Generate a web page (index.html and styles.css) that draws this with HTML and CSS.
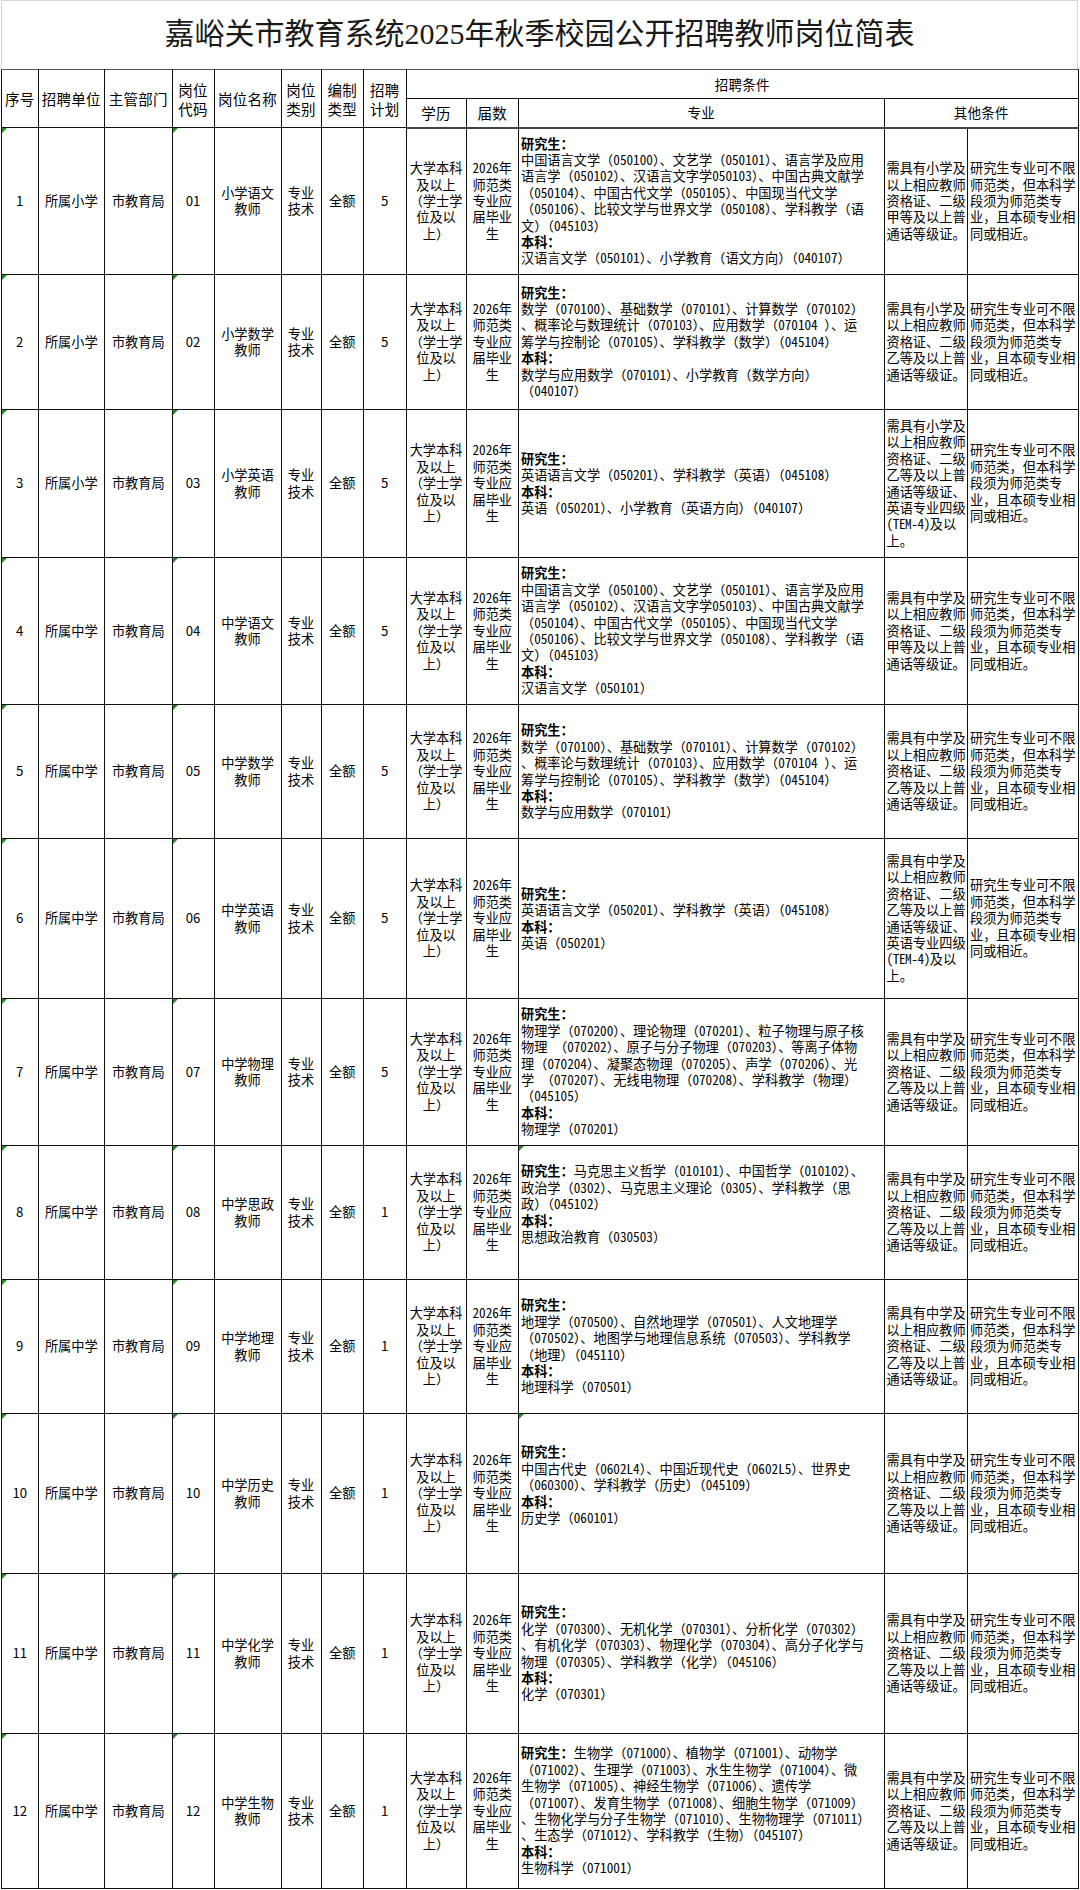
FILE: index.html
```html
<!DOCTYPE html>
<html lang="zh-CN">
<head>
<meta charset="utf-8">
<title>嘉峪关市教育系统2025年秋季校园公开招聘教师岗位简表</title>
<link rel="stylesheet" href="styles.css">
</head>
<body>
<div class="sheet">
  <div class="title">嘉峪关市教育系统2025年秋季校园公开招聘教师岗位简表</div>
  <table class="grid">
    <colgroup>
      <col class="c1"><col class="c2"><col class="c3"><col class="c4"><col class="c5"><col class="c6"><col class="c7"><col class="c8"><col class="c9"><col class="c10"><col class="c11"><col class="c12"><col class="c13">
    </colgroup>
    <thead>
      <tr class="hr">
        <th rowspan="2">序号</th>
        <th rowspan="2">招聘单位</th>
        <th rowspan="2">主管部门</th>
        <th rowspan="2">岗位<br>代码</th>
        <th rowspan="2">岗位名称</th>
        <th rowspan="2">岗位<br>类别</th>
        <th rowspan="2">编制<br>类型</th>
        <th rowspan="2">招聘<br>计划</th>
        <th colspan="5" class="small">招聘条件</th>
      </tr>
      <tr class="hr">
        <th>学历</th>
        <th>届数</th>
        <th class="small">专业</th>
        <th colspan="2" class="small">其他条件</th>
      </tr>
    </thead>
    <tbody>
      <tr class="h147">
        <td class="tri">1</td><td>所属小学</td><td>市教育局</td><td class="tri">01</td><td>小学语文<br>教师</td><td>专业<br>技术</td><td>全额</td><td>5</td>
        <td>大学本科<br>及以上<br>（学士学<br>位及以<br>上）</td>
        <td><span class="n">2026</span>年<br>师范类<br>专业应<br>届毕业<br>生</td>
        <td class="spec"><b>研究生：</b><br>中国语言文学（<span class="n">050100</span>）、文艺学（<span class="n">050101</span>）、语言学及应用<br>语言学（<span class="n">050102</span>）、汉语言文字学<span class="n">050103</span>）、中国古典文献学<br>（<span class="n">050104</span>）、中国古代文学（<span class="n">050105</span>）、中国现当代文学<br>（<span class="n">050106</span>）、比较文学与世界文学（<span class="n">050108</span>）、学科教学（语<br>文）（<span class="n">045103</span>）<br><b>本科：</b><br>汉语言文学（<span class="n">050101</span>）、小学教育（语文方向）（<span class="n">040107</span>）</td>
        <td class="oth">需具有小学及<br>以上相应教师<br>资格证、二级<br>甲等及以上普<br>通话等级证。</td>
        <td class="oth">研究生专业可不限<br>师范类，但本科学<br>段须为师范类专<br>业，且本硕专业相<br>同或相近。</td>
      </tr>
      <tr class="h135">
        <td class="tri">2</td><td>所属小学</td><td>市教育局</td><td class="tri">02</td><td>小学数学<br>教师</td><td>专业<br>技术</td><td>全额</td><td>5</td>
        <td>大学本科<br>及以上<br>（学士学<br>位及以<br>上）</td>
        <td><span class="n">2026</span>年<br>师范类<br>专业应<br>届毕业<br>生</td>
        <td class="spec"><b>研究生：</b><br>数学（<span class="n">070100</span>）、基础数学（<span class="n">070101</span>）、计算数学（<span class="n">070102</span>）<br>、概率论与数理统计（<span class="n">070103</span>）、应用数学（<span class="n">070104 </span>）、运<br>筹学与控制论（<span class="n">070105</span>）、学科教学（数学）（<span class="n">045104</span>）<br><b>本科：</b><br>数学与应用数学（<span class="n">070101</span>）、小学教育（数学方向）<br>（<span class="n">040107</span>）</td>
        <td class="oth">需具有小学及<br>以上相应教师<br>资格证、二级<br>乙等及以上普<br>通话等级证。</td>
        <td class="oth">研究生专业可不限<br>师范类，但本科学<br>段须为师范类专<br>业，且本硕专业相<br>同或相近。</td>
      </tr>
      <tr class="h148">
        <td class="tri">3</td><td>所属小学</td><td>市教育局</td><td class="tri">03</td><td>小学英语<br>教师</td><td>专业<br>技术</td><td>全额</td><td>5</td>
        <td>大学本科<br>及以上<br>（学士学<br>位及以<br>上）</td>
        <td><span class="n">2026</span>年<br>师范类<br>专业应<br>届毕业<br>生</td>
        <td class="spec"><b>研究生：</b><br>英语语言文学（<span class="n">050201</span>）、学科教学（英语）（<span class="n">045108</span>）<br><b>本科：</b><br>英语（<span class="n">050201</span>）、小学教育（英语方向）（<span class="n">040107</span>）</td>
        <td class="oth">需具有小学及<br>以上相应教师<br>资格证、二级<br>乙等及以上普<br>通话等级证、<br>英语专业四级<br><span class="n tem">(TEM-4)</span>及以<br>上。</td>
        <td class="oth">研究生专业可不限<br>师范类，但本科学<br>段须为师范类专<br>业，且本硕专业相<br>同或相近。</td>
      </tr>
      <tr class="h147">
        <td class="tri">4</td><td>所属中学</td><td>市教育局</td><td class="tri">04</td><td>中学语文<br>教师</td><td>专业<br>技术</td><td>全额</td><td>5</td>
        <td>大学本科<br>及以上<br>（学士学<br>位及以<br>上）</td>
        <td><span class="n">2026</span>年<br>师范类<br>专业应<br>届毕业<br>生</td>
        <td class="spec"><b>研究生：</b><br>中国语言文学（<span class="n">050100</span>）、文艺学（<span class="n">050101</span>）、语言学及应用<br>语言学（<span class="n">050102</span>）、汉语言文字学<span class="n">050103</span>）、中国古典文献学<br>（<span class="n">050104</span>）、中国古代文学（<span class="n">050105</span>）、中国现当代文学<br>（<span class="n">050106</span>）、比较文学与世界文学（<span class="n">050108</span>）、学科教学（语<br>文）（<span class="n">045103</span>）<br><b>本科：</b><br>汉语言文学（<span class="n">050101</span>）</td>
        <td class="oth">需具有中学及<br>以上相应教师<br>资格证、二级<br>甲等及以上普<br>通话等级证。</td>
        <td class="oth">研究生专业可不限<br>师范类，但本科学<br>段须为师范类专<br>业，且本硕专业相<br>同或相近。</td>
      </tr>
      <tr class="h134">
        <td class="tri">5</td><td>所属中学</td><td>市教育局</td><td class="tri">05</td><td>中学数学<br>教师</td><td>专业<br>技术</td><td>全额</td><td>5</td>
        <td>大学本科<br>及以上<br>（学士学<br>位及以<br>上）</td>
        <td><span class="n">2026</span>年<br>师范类<br>专业应<br>届毕业<br>生</td>
        <td class="spec"><b>研究生：</b><br>数学（<span class="n">070100</span>）、基础数学（<span class="n">070101</span>）、计算数学（<span class="n">070102</span>）<br>、概率论与数理统计（<span class="n">070103</span>）、应用数学（<span class="n">070104 </span>）、运<br>筹学与控制论（<span class="n">070105</span>）、学科教学（数学）（<span class="n">045104</span>）<br><b>本科：</b><br>数学与应用数学（<span class="n">070101</span>）</td>
        <td class="oth">需具有中学及<br>以上相应教师<br>资格证、二级<br>乙等及以上普<br>通话等级证。</td>
        <td class="oth">研究生专业可不限<br>师范类，但本科学<br>段须为师范类专<br>业，且本硕专业相<br>同或相近。</td>
      </tr>
      <tr class="h160">
        <td class="tri">6</td><td>所属中学</td><td>市教育局</td><td class="tri">06</td><td>中学英语<br>教师</td><td>专业<br>技术</td><td>全额</td><td>5</td>
        <td>大学本科<br>及以上<br>（学士学<br>位及以<br>上）</td>
        <td><span class="n">2026</span>年<br>师范类<br>专业应<br>届毕业<br>生</td>
        <td class="spec"><b>研究生：</b><br>英语语言文学（<span class="n">050201</span>）、学科教学（英语）（<span class="n">045108</span>）<br><b>本科：</b><br>英语（<span class="n">050201</span>）</td>
        <td class="oth">需具有中学及<br>以上相应教师<br>资格证、二级<br>乙等及以上普<br>通话等级证、<br>英语专业四级<br><span class="n tem">(TEM-4)</span>及以<br>上。</td>
        <td class="oth">研究生专业可不限<br>师范类，但本科学<br>段须为师范类专<br>业，且本硕专业相<br>同或相近。</td>
      </tr>
      <tr class="h147">
        <td class="tri">7</td><td>所属中学</td><td>市教育局</td><td class="tri">07</td><td>中学物理<br>教师</td><td>专业<br>技术</td><td>全额</td><td>5</td>
        <td>大学本科<br>及以上<br>（学士学<br>位及以<br>上）</td>
        <td><span class="n">2026</span>年<br>师范类<br>专业应<br>届毕业<br>生</td>
        <td class="spec"><b>研究生：</b><br>物理学（<span class="n">070200</span>）、理论物理（<span class="n">070201</span>）、粒子物理与原子核<br>物理<span class="n"> </span>（<span class="n">070202</span>）、原子与分子物理（<span class="n">070203</span>）、等离子体物<br>理（<span class="n">070204</span>）、凝聚态物理（<span class="n">070205</span>）、声学（<span class="n">070206</span>）、光<br>学<span class="n"> </span>（<span class="n">070207</span>）、无线电物理（<span class="n">070208</span>）、学科教学（物理）<br>（<span class="n">045105</span>）<br><b>本科：</b><br>物理学（<span class="n">070201</span>）</td>
        <td class="oth">需具有中学及<br>以上相应教师<br>资格证、二级<br>乙等及以上普<br>通话等级证。</td>
        <td class="oth">研究生专业可不限<br>师范类，但本科学<br>段须为师范类专<br>业，且本硕专业相<br>同或相近。</td>
      </tr>
      <tr class="h134">
        <td class="tri">8</td><td>所属中学</td><td>市教育局</td><td class="tri">08</td><td>中学思政<br>教师</td><td>专业<br>技术</td><td>全额</td><td>1</td>
        <td>大学本科<br>及以上<br>（学士学<br>位及以<br>上）</td>
        <td><span class="n">2026</span>年<br>师范类<br>专业应<br>届毕业<br>生</td>
        <td class="spec tri padb"><b>研究生：</b>马克思主义哲学（<span class="n">010101</span>）、中国哲学（<span class="n">010102</span>）、<br>政治学（<span class="n">0302</span>）、马克思主义理论（<span class="n">0305</span>）、学科教学（思<br>政）（<span class="n">045102</span>）<br><b>本科：</b><br>思想政治教育（<span class="n">030503</span>）</td>
        <td class="oth">需具有中学及<br>以上相应教师<br>资格证、二级<br>乙等及以上普<br>通话等级证。</td>
        <td class="oth">研究生专业可不限<br>师范类，但本科学<br>段须为师范类专<br>业，且本硕专业相<br>同或相近。</td>
      </tr>
      <tr class="h134">
        <td class="tri">9</td><td>所属中学</td><td>市教育局</td><td class="tri">09</td><td>中学地理<br>教师</td><td>专业<br>技术</td><td>全额</td><td>1</td>
        <td>大学本科<br>及以上<br>（学士学<br>位及以<br>上）</td>
        <td><span class="n">2026</span>年<br>师范类<br>专业应<br>届毕业<br>生</td>
        <td class="spec"><b>研究生：</b><br>地理学（<span class="n">070500</span>）、自然地理学（<span class="n">070501</span>）、人文地理学<br>（<span class="n">070502</span>）、地图学与地理信息系统（<span class="n">070503</span>）、学科教学<br>（地理）（<span class="n">045110</span>）<br><b>本科：</b><br>地理科学（<span class="n">070501</span>）</td>
        <td class="oth">需具有中学及<br>以上相应教师<br>资格证、二级<br>乙等及以上普<br>通话等级证。</td>
        <td class="oth">研究生专业可不限<br>师范类，但本科学<br>段须为师范类专<br>业，且本硕专业相<br>同或相近。</td>
      </tr>
      <tr class="h160">
        <td class="tri">10</td><td>所属中学</td><td>市教育局</td><td class="tri">10</td><td>中学历史<br>教师</td><td>专业<br>技术</td><td>全额</td><td>1</td>
        <td>大学本科<br>及以上<br>（学士学<br>位及以<br>上）</td>
        <td><span class="n">2026</span>年<br>师范类<br>专业应<br>届毕业<br>生</td>
        <td class="spec tri padb"><b>研究生：</b><br>中国古代史（<span class="n">0602L4</span>）、中国近现代史（<span class="n">0602L5</span>）、世界史<br>（<span class="n">060300</span>）、学科教学（历史）（<span class="n">045109</span>）<br><b>本科：</b><br>历史学（<span class="n">060101</span>）</td>
        <td class="oth">需具有中学及<br>以上相应教师<br>资格证、二级<br>乙等及以上普<br>通话等级证。</td>
        <td class="oth">研究生专业可不限<br>师范类，但本科学<br>段须为师范类专<br>业，且本硕专业相<br>同或相近。</td>
      </tr>
      <tr class="h160">
        <td class="tri">11</td><td>所属中学</td><td>市教育局</td><td class="tri">11</td><td>中学化学<br>教师</td><td>专业<br>技术</td><td>全额</td><td>1</td>
        <td>大学本科<br>及以上<br>（学士学<br>位及以<br>上）</td>
        <td><span class="n">2026</span>年<br>师范类<br>专业应<br>届毕业<br>生</td>
        <td class="spec"><b>研究生：</b><br>化学（<span class="n">070300</span>）、无机化学（<span class="n">070301</span>）、分析化学（<span class="n">070302</span>）<br>、有机化学（<span class="n">070303</span>）、物理化学（<span class="n">070304</span>）、高分子化学与<br>物理（<span class="n">070305</span>）、学科教学（化学）（<span class="n">045106</span>）<br><b>本科：</b><br>化学（<span class="n">070301</span>）</td>
        <td class="oth">需具有中学及<br>以上相应教师<br>资格证、二级<br>乙等及以上普<br>通话等级证。</td>
        <td class="oth">研究生专业可不限<br>师范类，但本科学<br>段须为师范类专<br>业，且本硕专业相<br>同或相近。</td>
      </tr>
      <tr class="h155">
        <td class="tri">12</td><td>所属中学</td><td>市教育局</td><td class="tri">12</td><td>中学生物<br>教师</td><td>专业<br>技术</td><td>全额</td><td>1</td>
        <td>大学本科<br>及以上<br>（学士学<br>位及以<br>上）</td>
        <td><span class="n">2026</span>年<br>师范类<br>专业应<br>届毕业<br>生</td>
        <td class="spec"><b>研究生：</b>生物学（<span class="n">071000</span>）、植物学（<span class="n">071001</span>）、动物学<br>（<span class="n">071002</span>）、生理学（<span class="n">071003</span>）、水生生物学（<span class="n">071004</span>）、微<br>生物学（<span class="n">071005</span>）、神经生物学（<span class="n">071006</span>）、遗传学<br>（<span class="n">071007</span>）、发育生物学（<span class="n">071008</span>）、细胞生物学（<span class="n">071009</span>）<br>、生物化学与分子生物学（<span class="n">071010</span>）、生物物理学（<span class="n">071011</span>）<br>、生态学（<span class="n">071012</span>）、学科教学（生物）（<span class="n">045107</span>）<br><b>本科：</b><br>生物科学（<span class="n">071001</span>）</td>
        <td class="oth">需具有中学及<br>以上相应教师<br>资格证、二级<br>乙等及以上普<br>通话等级证。</td>
        <td class="oth">研究生专业可不限<br>师范类，但本科学<br>段须为师范类专<br>业，且本硕专业相<br>同或相近。</td>
      </tr>
    </tbody>
  </table>
</div>
</body>
</html>
```
FILE: styles.css
```css
html, body {
  margin: 0;
  padding: 0;
  background: #fff;
}

body {
  font-family: "Noto Sans CJK SC", "Noto Sans CJK JP", sans-serif;
  font-size: 13.2px;
  line-height: 16.4px;
  color: #000;
}

.n {
  font-feature-settings: "hwid" 1;
}

.tem {
  letter-spacing: -0.4px;
}

.sheet {
  width: 1079px;
}

.title {
  height: 66px;
  margin-left: 1px;
  width: 1075px;
  border: 1px solid #d6d6d6;
  border-bottom: none;
  display: flex;
  align-items: center;
  justify-content: center;
  font-family: "Liberation Serif", "Noto Sans CJK SC", serif;
  font-size: 30px;
  line-height: 34px;
  color: #1a1a1a;
  padding-bottom: 2px;
  box-sizing: content-box;
}

.grid {
  border-collapse: collapse;
  table-layout: fixed;
  width: 1077px;
  margin-left: 1px;
}

.c1 { width: 36.5px; }
.c2 { width: 66.5px; }
.c3 { width: 67.5px; }
.c4 { width: 42px; }
.c5 { width: 67px; }
.c6 { width: 40px; }
.c7 { width: 42.5px; }
.c8 { width: 42.5px; }
.c9 { width: 60px; }
.c10 { width: 52.5px; }
.c11 { width: 365.5px; }
.c12 { width: 83.5px; }
.c13 { width: 111px; }

.grid th,
.grid td {
  border: 1px solid #111;
  padding: 0 1px;
  text-align: center;
  vertical-align: middle;
  white-space: nowrap;
  overflow: visible;
}

.grid th {
  font-weight: normal;
  font-size: 14.5px;
  line-height: 19px;
  letter-spacing: 0.2px;
}

.grid th.small {
  font-size: 13.5px;
}

.grid thead tr:first-child th {
  border-top: 1px solid #555;
}

.grid thead tr:last-child th {
  border-bottom: 2px solid #444;
}

.hr { height: 29px; }

.h134 { height: 134px; }
.h135 { height: 135px; }
.h147 { height: 147px; }
.h148 { height: 148px; }
.h155 { height: 155px; }
.h160 { height: 160px; }

.grid td.spec {
  text-align: left;
  padding: 0 1px 0 2px;
}

.grid td.spec b {
  font-weight: 700;
}

.grid td.oth {
  text-align: left;
  padding: 0 1px 0 2px;
}

.grid td.padb {
  padding-bottom: 16px;
}

.tri {
  position: relative;
}

.tri::before {
  content: "";
  position: absolute;
  left: 0;
  top: 0;
  width: 0;
  height: 0;
  border-top: 5px solid #1e8c1e;
  border-right: 5px solid transparent;
}
```
